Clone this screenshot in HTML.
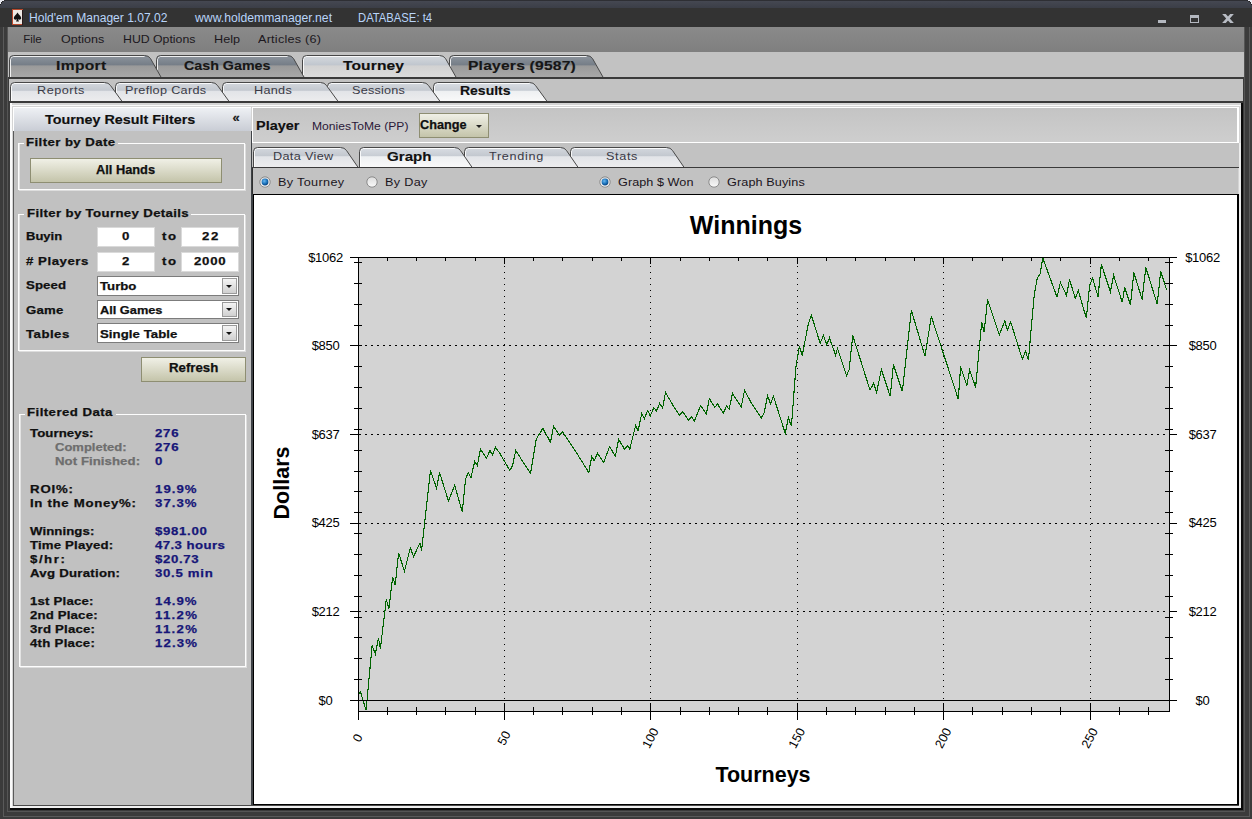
<!DOCTYPE html>
<html><head><meta charset="utf-8">
<style>
*{margin:0;padding:0;box-sizing:border-box}
html,body{width:1252px;height:819px;overflow:hidden;background:#3a3a3a;font-family:"Liberation Sans",sans-serif}
.a{position:absolute}
.t{position:absolute;white-space:pre;line-height:1}
.ttlbar{color:#b9d5fa;font-size:12px}
.menu{color:#1c1820;font-size:12px}
.tab1{font-weight:bold;font-size:13px;color:#161616}
.tab2{font-size:12px;color:#3c3c48}
.tab2s{font-weight:bold;font-size:13px;color:#101010}
.lbl{font-weight:bold;font-size:11px;color:#101010}
.val{font-weight:bold;font-size:11px;color:#1a1a88}
.gry{font-weight:bold;font-size:11px;color:#7a7a7a}
.yl{font-size:13px;fill:#000;letter-spacing:-0.3px}
.xl{font-size:12.5px;fill:#000}
.ttl{font-size:25px;font-weight:bold;fill:#000}
.axt{font-size:21.5px;font-weight:bold;fill:#000}
.inp{background:#fff;border:1px solid #d8d8d8;font-weight:bold;font-size:11px;color:#101010;text-align:center}
.sel{background:#fff;border:1px solid #7a7a7a;}
.btn{background:linear-gradient(#f0f0e6,#c4c4aa);border:1px solid #8e8e72}
.grp{border:1px solid #fdfdfd;box-shadow:inset 1px 0 0 rgba(255,255,255,.55), 1px 1px 0 rgba(255,255,255,.45)}
</style></head><body>
<!-- frame -->
<div class="a" style="left:0;top:0;width:1252px;height:819px;background:#3b3b3b"></div>
<div class="a" style="left:3px;top:27px;width:1px;height:789px;background:#5a5a5a"></div>
<div class="a" style="left:1249px;top:27px;width:1px;height:789px;background:#5a5a5a"></div>
<div class="a" style="left:3px;top:816px;width:1247px;height:1px;background:#5a5a5a"></div>
<div class="a" style="left:7px;top:27px;width:1px;height:784px;background:#555"></div>
<div class="a" style="left:1244px;top:27px;width:1px;height:784px;background:#555"></div>
<div class="a" style="left:7px;top:811px;width:1238px;height:1px;background:#555"></div>
<!-- title bar -->
<div class="a" style="left:0;top:0;width:1252px;height:27px;background:#333333"></div>
<div class="a" style="left:0;top:0;width:1252px;height:8px;background:linear-gradient(#2e2f34 0,#2e2f34 1px,#454852 1px,#3b3e47 8px)"></div>
<svg class="a" style="left:0;top:0" width="6" height="6"><path d="M0 0H4V1H2V2H1V4H0Z" fill="#e8e8f0"/><path d="M4 0.5H4.5M2 1.5H3.5M1.5 2V3.5M0.5 4V5" stroke="#222"/></svg>
<svg class="a" style="left:1246px;top:0" width="6" height="6"><path d="M6 0H2V1H4V2H5V4H6Z" fill="#e8e8f0"/><path d="M2 0.5H1.5M4 1.5H2.5M4.5 2V3.5M5.5 4V5" stroke="#222"/></svg>
<svg class="a" style="left:12px;top:9px" width="11" height="16"><rect x="0.5" y="0.5" width="10" height="15" fill="#efe9e4" stroke="#b8482c"/><rect x="10" y="1" width="1" height="15" fill="#2a1a1a"/><path d="M5.5 3.5 C4 6 1.8 7 1.8 9 C1.8 10.6 3.6 11.2 5 10.2 L4 12.5 H7 L6 10.2 C7.4 11.2 9.2 10.6 9.2 9 C9.2 7 7 6 5.5 3.5Z" fill="#111"/></svg>
<div class="a" style="left:1158px;top:20px;width:8px;height:3px;background:#b4b8c0"></div>
<div class="a" style="left:1190px;top:15px;width:9px;height:8px;border:1px solid #b4b8c0;border-top-width:3px"></div>
<svg class="a" style="left:1220px;top:12px" width="16" height="14"><defs><clipPath id="cx"><rect x="0" y="2" width="16" height="9"/></clipPath></defs><path clip-path="url(#cx)" d="M2.6 0.5 L13.4 12.5 M13.4 0.5 L2.6 12.5" stroke="#b8bcc4" stroke-width="2.7"/></svg>
<!-- menu -->
<div class="a" style="left:8px;top:27px;width:1236px;height:25px;background:linear-gradient(#8a8a8a,#7f7f7f)"></div>
<!-- tab strips -->
<div class="a" style="left:8px;top:52px;width:1236px;height:25px;background:#c2c2c2"></div>
<div class="a" style="left:8px;top:77px;width:1236px;height:1px;background:#3c3c3c"></div>
<div class="a" style="left:9px;top:78px;width:1234px;height:23px;background:#c2c2c2"></div>
<div class="a" style="left:9px;top:101px;width:1234px;height:2px;background:#3a3a3a"></div>
<svg class="a" style="left:449px;top:55px" width="156" height="23"><defs><linearGradient id="t1_3" x1="0" y1="0" x2="0" y2="1"><stop offset="0" stop-color="#8e959e"/><stop offset="0.42" stop-color="#757d87"/><stop offset="0.46" stop-color="#9a9a9a"/><stop offset="1" stop-color="#a9a9a9"/></linearGradient></defs><path d="M0.5 23 V4.5 Q0.5 0.5 4.5 0.5 H137.5 Q141.5 0.5 143.5 3.5 L154.5 23 Z" fill="url(#t1_3)"/><path d="M1.5 23 V4.5 Q1.5 1.5 4.5 1.5 H137.5" fill="none" stroke="#fff" stroke-opacity="0.85"/><path d="M0.5 23 V4.5 Q0.5 0.5 4.5 0.5 H137.5 Q141.5 0.5 143.5 3.5 L154.5 23" fill="none" stroke="#484848"/></svg>
<svg class="a" style="left:302px;top:55px" width="156" height="23"><defs><linearGradient id="t1_2" x1="0" y1="0" x2="0" y2="1"><stop offset="0" stop-color="#d6dade"/><stop offset="0.42" stop-color="#c0c6ce"/><stop offset="0.46" stop-color="#d2d2d2"/><stop offset="1" stop-color="#dcdcdc"/></linearGradient></defs><path d="M0.5 23 V4.5 Q0.5 0.5 4.5 0.5 H137.5 Q141.5 0.5 143.5 3.5 L154.5 23 Z" fill="url(#t1_2)"/><path d="M1.5 23 V4.5 Q1.5 1.5 4.5 1.5 H137.5" fill="none" stroke="#fff" stroke-opacity="0.85"/><path d="M0.5 23 V4.5 Q0.5 0.5 4.5 0.5 H137.5 Q141.5 0.5 143.5 3.5 L154.5 23" fill="none" stroke="#484848"/></svg>
<svg class="a" style="left:156px;top:55px" width="150" height="23"><defs><linearGradient id="t1_1" x1="0" y1="0" x2="0" y2="1"><stop offset="0" stop-color="#8e959e"/><stop offset="0.42" stop-color="#757d87"/><stop offset="0.46" stop-color="#9a9a9a"/><stop offset="1" stop-color="#a9a9a9"/></linearGradient></defs><path d="M0.5 23 V4.5 Q0.5 0.5 4.5 0.5 H131.5 Q135.5 0.5 137.5 3.5 L148.5 23 Z" fill="url(#t1_1)"/><path d="M1.5 23 V4.5 Q1.5 1.5 4.5 1.5 H131.5" fill="none" stroke="#fff" stroke-opacity="0.85"/><path d="M0.5 23 V4.5 Q0.5 0.5 4.5 0.5 H131.5 Q135.5 0.5 137.5 3.5 L148.5 23" fill="none" stroke="#484848"/></svg>
<svg class="a" style="left:9px;top:55px" width="154" height="23"><defs><linearGradient id="t1_0" x1="0" y1="0" x2="0" y2="1"><stop offset="0" stop-color="#8e959e"/><stop offset="0.42" stop-color="#757d87"/><stop offset="0.46" stop-color="#9a9a9a"/><stop offset="1" stop-color="#a9a9a9"/></linearGradient></defs><path d="M0.5 23 V4.5 Q0.5 0.5 4.5 0.5 H135.5 Q139.5 0.5 141.5 3.5 L152.5 23 Z" fill="url(#t1_0)"/><path d="M1.5 23 V4.5 Q1.5 1.5 4.5 1.5 H135.5" fill="none" stroke="#fff" stroke-opacity="0.85"/><path d="M0.5 23 V4.5 Q0.5 0.5 4.5 0.5 H135.5 Q139.5 0.5 141.5 3.5 L152.5 23" fill="none" stroke="#484848"/></svg>
<svg class="a" style="left:433px;top:82px" width="116" height="20"><defs><linearGradient id="t2_4" x1="0" y1="0" x2="0" y2="1"><stop offset="0" stop-color="#dadee4"/><stop offset="0.4" stop-color="#c8cdd4"/><stop offset="0.45" stop-color="#eef0f2"/><stop offset="1" stop-color="#fafafa"/></linearGradient></defs><path d="M0.5 20 V4.5 Q0.5 0.5 4.5 0.5 H96.5 Q100.5 0.5 102.5 3.5 L114.5 20 Z" fill="url(#t2_4)"/><path d="M1.5 20 V4.5 Q1.5 1.5 4.5 1.5 H96.5" fill="none" stroke="#fff" stroke-opacity="0.85"/><path d="M0.5 20 V4.5 Q0.5 0.5 4.5 0.5 H96.5 Q100.5 0.5 102.5 3.5 L114.5 20" fill="none" stroke="#484848"/></svg>
<svg class="a" style="left:327px;top:82px" width="115" height="20"><defs><linearGradient id="t2_3" x1="0" y1="0" x2="0" y2="1"><stop offset="0" stop-color="#d4d8de"/><stop offset="0.4" stop-color="#c3c8cf"/><stop offset="0.45" stop-color="#e2e4e8"/><stop offset="1" stop-color="#ededee"/></linearGradient></defs><path d="M0.5 20 V4.5 Q0.5 0.5 4.5 0.5 H95.5 Q99.5 0.5 101.5 3.5 L113.5 20 Z" fill="url(#t2_3)"/><path d="M1.5 20 V4.5 Q1.5 1.5 4.5 1.5 H95.5" fill="none" stroke="#fff" stroke-opacity="0.85"/><path d="M0.5 20 V4.5 Q0.5 0.5 4.5 0.5 H95.5 Q99.5 0.5 101.5 3.5 L113.5 20" fill="none" stroke="#484848"/></svg>
<svg class="a" style="left:222px;top:82px" width="118" height="20"><defs><linearGradient id="t2_2" x1="0" y1="0" x2="0" y2="1"><stop offset="0" stop-color="#d4d8de"/><stop offset="0.4" stop-color="#c3c8cf"/><stop offset="0.45" stop-color="#e2e4e8"/><stop offset="1" stop-color="#ededee"/></linearGradient></defs><path d="M0.5 20 V4.5 Q0.5 0.5 4.5 0.5 H98.5 Q102.5 0.5 104.5 3.5 L116.5 20 Z" fill="url(#t2_2)"/><path d="M1.5 20 V4.5 Q1.5 1.5 4.5 1.5 H98.5" fill="none" stroke="#fff" stroke-opacity="0.85"/><path d="M0.5 20 V4.5 Q0.5 0.5 4.5 0.5 H98.5 Q102.5 0.5 104.5 3.5 L116.5 20" fill="none" stroke="#484848"/></svg>
<svg class="a" style="left:115px;top:82px" width="116" height="20"><defs><linearGradient id="t2_1" x1="0" y1="0" x2="0" y2="1"><stop offset="0" stop-color="#d4d8de"/><stop offset="0.4" stop-color="#c3c8cf"/><stop offset="0.45" stop-color="#e2e4e8"/><stop offset="1" stop-color="#ededee"/></linearGradient></defs><path d="M0.5 20 V4.5 Q0.5 0.5 4.5 0.5 H96.5 Q100.5 0.5 102.5 3.5 L114.5 20 Z" fill="url(#t2_1)"/><path d="M1.5 20 V4.5 Q1.5 1.5 4.5 1.5 H96.5" fill="none" stroke="#fff" stroke-opacity="0.85"/><path d="M0.5 20 V4.5 Q0.5 0.5 4.5 0.5 H96.5 Q100.5 0.5 102.5 3.5 L114.5 20" fill="none" stroke="#484848"/></svg>
<svg class="a" style="left:10px;top:82px" width="114" height="20"><defs><linearGradient id="t2_0" x1="0" y1="0" x2="0" y2="1"><stop offset="0" stop-color="#d4d8de"/><stop offset="0.4" stop-color="#c3c8cf"/><stop offset="0.45" stop-color="#e2e4e8"/><stop offset="1" stop-color="#ededee"/></linearGradient></defs><path d="M0.5 20 V4.5 Q0.5 0.5 4.5 0.5 H94.5 Q98.5 0.5 100.5 3.5 L112.5 20 Z" fill="url(#t2_0)"/><path d="M1.5 20 V4.5 Q1.5 1.5 4.5 1.5 H94.5" fill="none" stroke="#fff" stroke-opacity="0.85"/><path d="M0.5 20 V4.5 Q0.5 0.5 4.5 0.5 H94.5 Q98.5 0.5 100.5 3.5 L112.5 20" fill="none" stroke="#484848"/></svg>
<div class="a" style="left:8px;top:77px;width:1236px;height:2px;background:#3a3a3a"></div>
<div class="a" style="left:9px;top:101px;width:1234px;height:2px;background:#3a3a3a"></div>
<!-- content frame -->
<div class="a" style="left:10px;top:103px;width:1233px;height:706px;background:#d4d4d4"></div>
<div class="a" style="left:10px;top:105px;width:1231px;height:703px;border:1px solid #fafafa;border-right-color:#e0e0e0"></div>
<!-- left panel -->
<div class="a" style="left:13px;top:107px;width:238px;height:24px;background:linear-gradient(#eef0f4,#c9cdd5);border-top:1px solid #fff;border-left:1px solid #fff"></div>
<div class="t" style="left:232.5px;top:111px;font-size:13px;font-weight:bold;color:#181818;-webkit-text-stroke:0.2px #181818">&#171;</div>
<div class="a" style="left:13px;top:131px;width:238px;height:674px;background:#c1c1c1;border-left:1px solid #5a5a5a"></div>
<div class="a" style="left:251px;top:131px;width:2px;height:674px;background:#3e4246"></div>
<div class="a grp" style="left:18px;top:143px;width:227px;height:47px"></div>
<div class="a" style="left:24px;top:138px;width:94px;height:10px;background:#c1c1c1"></div>
<div class="a grp" style="left:18px;top:214px;width:227px;height:137px"></div>
<div class="a" style="left:24px;top:209px;width:167px;height:10px;background:#c1c1c1"></div>
<div class="a grp" style="left:19px;top:414px;width:227px;height:253px"></div>
<div class="a" style="left:25px;top:409px;width:91px;height:10px;background:#c1c1c1"></div>
<div class="a btn" style="left:30px;top:158px;width:192px;height:25px"></div>
<div class="a btn" style="left:141px;top:357px;width:105px;height:25px"></div>
<div class="a" style="left:97px;top:227px;width:58px;height:20px;background:#fff;border:1px solid #dadada"></div>
<div class="a" style="left:181px;top:227px;width:58px;height:20px;background:#fff;border:1px solid #dadada"></div>
<div class="a" style="left:97px;top:252px;width:58px;height:20px;background:#fff;border:1px solid #dadada"></div>
<div class="a" style="left:181px;top:252px;width:58px;height:20px;background:#fff;border:1px solid #dadada"></div>
<div class="a" style="left:97px;top:276px;width:142px;height:20px;background:#fff;border:1px solid #7c7c7c"></div>
<div class="a" style="left:222px;top:278px;width:15px;height:16px;background:linear-gradient(#f4f4f4,#d0d0d0);border:1px solid #9a9a9a"></div>
<svg class="a" style="left:226px;top:285px" width="7" height="4"><path d="M0 0H6L3 3Z" fill="#111"/></svg>
<div class="a" style="left:97px;top:300px;width:142px;height:19px;background:#fff;border:1px solid #7c7c7c"></div>
<div class="a" style="left:222px;top:302px;width:15px;height:15px;background:linear-gradient(#f4f4f4,#d0d0d0);border:1px solid #9a9a9a"></div>
<svg class="a" style="left:226px;top:308px" width="7" height="4"><path d="M0 0H6L3 3Z" fill="#111"/></svg>
<div class="a" style="left:97px;top:323px;width:142px;height:20px;background:#fff;border:1px solid #7c7c7c"></div>
<div class="a" style="left:222px;top:325px;width:15px;height:16px;background:linear-gradient(#f4f4f4,#d0d0d0);border:1px solid #9a9a9a"></div>
<svg class="a" style="left:226px;top:332px" width="7" height="4"><path d="M0 0H6L3 3Z" fill="#111"/></svg>
<!-- main area -->
<div class="a" style="left:252px;top:107px;width:987px;height:36px;background:linear-gradient(#c4c4c4,#cecece);border:1px solid #fff;border-right-width:2px"></div>
<div class="a btn" style="left:419px;top:113px;width:70px;height:25px"></div>
<svg class="a" style="left:476px;top:125px" width="8" height="5"><path d="M0 0H6L3 3Z" fill="#202020"/></svg>
<div class="a" style="left:252px;top:143px;width:989px;height:25px;background:#c2c2c2"></div>
<svg class="a" style="left:570px;top:147px" width="116" height="21"><defs><linearGradient id="st_3" x1="0" y1="0" x2="0" y2="1"><stop offset="0" stop-color="#d4d8de"/><stop offset="0.4" stop-color="#c3c8cf"/><stop offset="0.45" stop-color="#e2e4e8"/><stop offset="1" stop-color="#ededee"/></linearGradient></defs><path d="M0.5 21 V4.5 Q0.5 0.5 4.5 0.5 H96.5 Q100.5 0.5 102.5 3.5 L114.5 21 Z" fill="url(#st_3)"/><path d="M1.5 21 V4.5 Q1.5 1.5 4.5 1.5 H96.5" fill="none" stroke="#fff" stroke-opacity="0.85"/><path d="M0.5 21 V4.5 Q0.5 0.5 4.5 0.5 H96.5 Q100.5 0.5 102.5 3.5 L114.5 21" fill="none" stroke="#484848"/></svg>
<svg class="a" style="left:464px;top:147px" width="116" height="21"><defs><linearGradient id="st_2" x1="0" y1="0" x2="0" y2="1"><stop offset="0" stop-color="#d4d8de"/><stop offset="0.4" stop-color="#c3c8cf"/><stop offset="0.45" stop-color="#e2e4e8"/><stop offset="1" stop-color="#ededee"/></linearGradient></defs><path d="M0.5 21 V4.5 Q0.5 0.5 4.5 0.5 H96.5 Q100.5 0.5 102.5 3.5 L114.5 21 Z" fill="url(#st_2)"/><path d="M1.5 21 V4.5 Q1.5 1.5 4.5 1.5 H96.5" fill="none" stroke="#fff" stroke-opacity="0.85"/><path d="M0.5 21 V4.5 Q0.5 0.5 4.5 0.5 H96.5 Q100.5 0.5 102.5 3.5 L114.5 21" fill="none" stroke="#484848"/></svg>
<svg class="a" style="left:359px;top:147px" width="115" height="21"><defs><linearGradient id="st_1" x1="0" y1="0" x2="0" y2="1"><stop offset="0" stop-color="#dadee4"/><stop offset="0.4" stop-color="#c8cdd4"/><stop offset="0.45" stop-color="#eef0f2"/><stop offset="1" stop-color="#fafafa"/></linearGradient></defs><path d="M0.5 21 V4.5 Q0.5 0.5 4.5 0.5 H95.5 Q99.5 0.5 101.5 3.5 L113.5 21 Z" fill="url(#st_1)"/><path d="M1.5 21 V4.5 Q1.5 1.5 4.5 1.5 H95.5" fill="none" stroke="#fff" stroke-opacity="0.85"/><path d="M0.5 21 V4.5 Q0.5 0.5 4.5 0.5 H95.5 Q99.5 0.5 101.5 3.5 L113.5 21" fill="none" stroke="#484848"/></svg>
<svg class="a" style="left:253px;top:147px" width="107" height="21"><defs><linearGradient id="st_0" x1="0" y1="0" x2="0" y2="1"><stop offset="0" stop-color="#d4d8de"/><stop offset="0.4" stop-color="#c3c8cf"/><stop offset="0.45" stop-color="#e2e4e8"/><stop offset="1" stop-color="#ededee"/></linearGradient></defs><path d="M0.5 21 V4.5 Q0.5 0.5 4.5 0.5 H87.5 Q91.5 0.5 93.5 3.5 L105.5 21 Z" fill="url(#st_0)"/><path d="M1.5 21 V4.5 Q1.5 1.5 4.5 1.5 H87.5" fill="none" stroke="#fff" stroke-opacity="0.85"/><path d="M0.5 21 V4.5 Q0.5 0.5 4.5 0.5 H87.5 Q91.5 0.5 93.5 3.5 L105.5 21" fill="none" stroke="#484848"/></svg>
<div class="a" style="left:252px;top:167px;width:987px;height:1px;background:#3a3a3a"></div>
<div class="a" style="left:252px;top:168px;width:986px;height:26px;background:#c2c2c2;border-left:1px solid #303030"></div>
<svg class="a" style="left:259px;top:176px" width="12" height="12"><defs><radialGradient id="rd" cx="0.4" cy="0.35" r="0.7"><stop offset="0" stop-color="#6ab8f0"/><stop offset="0.6" stop-color="#1a70b8"/><stop offset="1" stop-color="#063c78"/></radialGradient><linearGradient id="rb" x1="0" y1="0" x2="0" y2="1"><stop offset="0" stop-color="#dcdcdc"/><stop offset="1" stop-color="#fafafa"/></linearGradient></defs><circle cx="6" cy="6" r="5.2" fill="url(#rb)" stroke="#8a8a8a" stroke-width="1"/><circle cx="6" cy="6" r="3.4" fill="url(#rd)"/></svg>
<svg class="a" style="left:366px;top:176px" width="12" height="12"><defs><radialGradient id="rd" cx="0.4" cy="0.35" r="0.7"><stop offset="0" stop-color="#6ab8f0"/><stop offset="0.6" stop-color="#1a70b8"/><stop offset="1" stop-color="#063c78"/></radialGradient><linearGradient id="rb" x1="0" y1="0" x2="0" y2="1"><stop offset="0" stop-color="#dcdcdc"/><stop offset="1" stop-color="#fafafa"/></linearGradient></defs><circle cx="6" cy="6" r="5.2" fill="url(#rb)" stroke="#8a8a8a" stroke-width="1"/></svg>
<svg class="a" style="left:599px;top:176px" width="12" height="12"><defs><radialGradient id="rd" cx="0.4" cy="0.35" r="0.7"><stop offset="0" stop-color="#6ab8f0"/><stop offset="0.6" stop-color="#1a70b8"/><stop offset="1" stop-color="#063c78"/></radialGradient><linearGradient id="rb" x1="0" y1="0" x2="0" y2="1"><stop offset="0" stop-color="#dcdcdc"/><stop offset="1" stop-color="#fafafa"/></linearGradient></defs><circle cx="6" cy="6" r="5.2" fill="url(#rb)" stroke="#8a8a8a" stroke-width="1"/><circle cx="6" cy="6" r="3.4" fill="url(#rd)"/></svg>
<svg class="a" style="left:708px;top:176px" width="12" height="12"><defs><radialGradient id="rd" cx="0.4" cy="0.35" r="0.7"><stop offset="0" stop-color="#6ab8f0"/><stop offset="0.6" stop-color="#1a70b8"/><stop offset="1" stop-color="#063c78"/></radialGradient><linearGradient id="rb" x1="0" y1="0" x2="0" y2="1"><stop offset="0" stop-color="#dcdcdc"/><stop offset="1" stop-color="#fafafa"/></linearGradient></defs><circle cx="6" cy="6" r="5.2" fill="url(#rb)" stroke="#8a8a8a" stroke-width="1"/></svg>
<div class="a" style="left:253px;top:194px;width:986px;height:611px;background:#fff;border:1px solid #000;border-width:1px 2px 1px 1px"></div>
<svg class="a" style="left:0;top:0" width="1252" height="819">
<rect x="358" y="257" width="811" height="454" fill="#d3d3d3"/>
<line x1="359" y1="611.5" x2="1169" y2="611.5" stroke="#000" stroke-dasharray="2 4"/>
<line x1="359" y1="523.5" x2="1169" y2="523.5" stroke="#000" stroke-dasharray="2 4"/>
<line x1="359" y1="434.5" x2="1169" y2="434.5" stroke="#000" stroke-dasharray="2 4"/>
<line x1="359" y1="345.5" x2="1169" y2="345.5" stroke="#000" stroke-dasharray="2 4"/>
<line x1="504.5" y1="711" x2="504.5" y2="258" stroke="#000" stroke-dasharray="1 5"/>
<line x1="650.5" y1="711" x2="650.5" y2="258" stroke="#000" stroke-dasharray="1 5"/>
<line x1="797.5" y1="711" x2="797.5" y2="258" stroke="#000" stroke-dasharray="1 5"/>
<line x1="943.5" y1="711" x2="943.5" y2="258" stroke="#000" stroke-dasharray="1 5"/>
<line x1="1090.5" y1="711" x2="1090.5" y2="258" stroke="#000" stroke-dasharray="1 5"/>
<path d="M358.5 694.5 L360.6 692.1 L366.1 710.4 L372.1 645.3 L375.3 654.0 L378.5 638.2 L380.4 648.5 L386.3 599.4 L388.9 608.4 L392.7 577.0 L395.2 584.9 L398.6 552.7 L404.4 571.2 L410.3 547.8 L413.6 556.6 L420.0 542.9 L421.6 550.7 L430.4 470.6 L436.6 488.2 L439.6 472.6 L448.4 500.9 L454.6 485.3 L462.3 511.9 L465.6 478.9 L468.1 472.7 L471.0 477.4 L474.7 461.3 L477.3 465.4 L480.5 449.3 L486.4 458.1 L490.0 450.7 L492.5 454.7 L495.5 447.4 L499.3 452.5 L509.8 470.4 L512.5 465.7 L515.7 450.7 L530.6 473.3 L536.2 439.3 L542.8 428.3 L550.5 442.2 L553.5 426.4 L559.6 435.2 L562.6 431.7 L577.3 454.0 L588.8 472.6 L591.7 456.5 L594.2 460.6 L597.5 453.3 L603.7 462.3 L609.6 446.7 L615.4 456.2 L618.6 439.3 L624.5 449.2 L627.9 445.6 L629.8 449.2 L635.6 425.4 L638.1 430.5 L641.8 413.4 L644.4 418.4 L647.7 410.5 L650.3 415.9 L653.8 407.5 L656.4 411.1 L659.7 403.4 L662.6 408.1 L665.5 392.5 L674.0 407.1 L679.6 415.5 L682.4 411.4 L688.6 420.4 L691.4 416.6 L694.4 421.3 L700.5 405.5 L706.4 414.0 L709.3 398.6 L714.9 407.4 L717.4 403.7 L723.2 413.2 L726.6 405.9 L729.1 409.3 L732.5 393.4 L741.2 406.9 L744.5 390.5 L751.8 403.7 L761.3 418.1 L764.2 412.5 L767.6 395.6 L770.5 404.0 L773.5 396.4 L785.2 433.3 L788.4 417.6 L791.4 426.4 L796.0 366.0 L799.4 346.2 L802.3 355.4 L808.4 323.4 L811.4 315.4 L820.2 343.2 L823.4 335.5 L826.8 344.7 L829.4 337.8 L835.5 354.9 L837.5 348.6 L846.5 375.5 L849.2 369.6 L852.7 335.5 L870.0 390.1 L873.6 383.5 L876.6 392.3 L881.4 369.6 L890.2 396.4 L893.4 364.5 L902.3 391.4 L911.4 310.5 L925.0 356.2 L931.3 316.4 L958.3 399.2 L960.6 366.5 L966.8 385.5 L969.7 369.9 L975.6 387.4 L981.7 322.2 L984.1 331.8 L987.6 299.5 L999.3 335.1 L1004.8 321.0 L1007.4 330.1 L1010.7 322.0 L1022.3 359.2 L1025.5 351.1 L1028.4 360.2 L1034.3 294.0 L1037.2 278.6 L1040.2 273.4 L1042.8 258.1 L1057.0 297.2 L1060.4 282.5 L1066.5 295.4 L1069.5 279.3 L1075.3 298.4 L1078.3 290.7 L1086.3 318.1 L1089.7 285.2 L1092.6 278.1 L1098.0 296.6 L1101.4 264.4 L1110.4 291.5 L1113.6 275.4 L1122.3 302.3 L1124.7 287.5 L1130.5 304.9 L1133.8 272.4 L1142.1 299.5 L1145.8 267.4 L1157.2 304.0 L1160.7 271.5 L1166.8 290.3" fill="none" stroke="#006400" stroke-width="1.1" shape-rendering="crispEdges"/>
<path d="M350 257.5H1177 M358.5 257V720 M1169.5 257V711 M358 711.5H1170 M350 700.5H1177" stroke="#000" fill="none"/>
<path d="M354 679.5H362 M1165 679.5H1173 M354 658.5H362 M1165 658.5H1173 M354 637.5H362 M1165 637.5H1173 M354 617.5H362 M1165 617.5H1173 M354 596.5H362 M1165 596.5H1173 M354 575.5H362 M1165 575.5H1173 M354 554.5H362 M1165 554.5H1173 M354 533.5H362 M1165 533.5H1173 M354 512.5H362 M1165 512.5H1173 M354 491.5H362 M1165 491.5H1173 M354 471.5H362 M1165 471.5H1173 M354 450.5H362 M1165 450.5H1173 M354 429.5H362 M1165 429.5H1173 M354 408.5H362 M1165 408.5H1173 M354 387.5H362 M1165 387.5H1173 M354 366.5H362 M1165 366.5H1173 M354 345.5H362 M1165 345.5H1173 M354 325.5H362 M1165 325.5H1173 M354 304.5H362 M1165 304.5H1173 M354 283.5H362 M1165 283.5H1173 M354 262.5H362 M1165 262.5H1173 M350 611.5H358 M1169 611.5H1177 M350 523.5H358 M1169 523.5H1177 M350 434.5H358 M1169 434.5H1177 M350 345.5H358 M1169 345.5H1177 M350 257.5H358 M1169 257.5H1177 M387.5 707V715 M387.5 257V261 M416.5 707V715 M416.5 257V261 M445.5 707V715 M445.5 257V261 M475.5 707V715 M475.5 257V261 M504.5 703V720 M504.5 257V264 M533.5 707V715 M533.5 257V261 M562.5 707V715 M562.5 257V261 M592.5 707V715 M592.5 257V261 M621.5 707V715 M621.5 257V261 M650.5 703V720 M650.5 257V264 M680.5 707V715 M680.5 257V261 M709.5 707V715 M709.5 257V261 M738.5 707V715 M738.5 257V261 M767.5 707V715 M767.5 257V261 M797.5 703V720 M797.5 257V264 M826.5 707V715 M826.5 257V261 M855.5 707V715 M855.5 257V261 M885.5 707V715 M885.5 257V261 M914.5 707V715 M914.5 257V261 M943.5 703V720 M943.5 257V264 M972.5 707V715 M972.5 257V261 M1002.5 707V715 M1002.5 257V261 M1031.5 707V715 M1031.5 257V261 M1060.5 707V715 M1060.5 257V261 M1090.5 703V720 M1090.5 257V264 M1119.5 707V715 M1119.5 257V261 M1148.5 707V715 M1148.5 257V261" stroke="#000" fill="none" shape-rendering="crispEdges"/>
<text x="325.5" y="704.6" text-anchor="middle" class="yl">$0</text>
<text x="1202.5" y="704.6" text-anchor="middle" class="yl">$0</text>
<text x="325.5" y="616.0" text-anchor="middle" class="yl">$212</text>
<text x="1202.5" y="616.0" text-anchor="middle" class="yl">$212</text>
<text x="325.5" y="527.4" text-anchor="middle" class="yl">$425</text>
<text x="1202.5" y="527.4" text-anchor="middle" class="yl">$425</text>
<text x="325.5" y="438.8" text-anchor="middle" class="yl">$637</text>
<text x="1202.5" y="438.8" text-anchor="middle" class="yl">$637</text>
<text x="325.5" y="350.2" text-anchor="middle" class="yl">$850</text>
<text x="1202.5" y="350.2" text-anchor="middle" class="yl">$850</text>
<text x="325.5" y="261.6" text-anchor="middle" class="yl">$1062</text>
<text x="1202.5" y="261.6" text-anchor="middle" class="yl">$1062</text>
<text class="xl" text-anchor="middle" transform="translate(357.5 738) rotate(-62)" y="4.3">0</text>
<text class="xl" text-anchor="middle" transform="translate(503.9 738) rotate(-62)" y="4.3">50</text>
<text class="xl" text-anchor="middle" transform="translate(650.3 738) rotate(-62)" y="4.3">100</text>
<text class="xl" text-anchor="middle" transform="translate(796.7 738) rotate(-62)" y="4.3">150</text>
<text class="xl" text-anchor="middle" transform="translate(943.1 738) rotate(-62)" y="4.3">200</text>
<text class="xl" text-anchor="middle" transform="translate(1089.5 738) rotate(-62)" y="4.3">250</text>
<text x="746" y="234" text-anchor="middle" class="ttl">Winnings</text>
<text x="763" y="782" text-anchor="middle" class="axt">Tourneys</text>
<text transform="translate(289 483) rotate(-90)" text-anchor="middle" class="axt">Dollars</text>
</svg>
<!-- bottom lines -->
<div class="a" style="left:13px;top:805px;width:1229px;height:1px;background:#4a4a4a"></div>
<div class="a" style="left:10px;top:806px;width:1231px;height:2px;background:#f0f0f0"></div>
<div class="a" style="left:10px;top:808px;width:1233px;height:2px;background:#0a0a0a"></div>
<div class="a" style="left:1239px;top:143px;width:2px;height:665px;background:#ececec"></div>
<div class="a" style="left:1241px;top:103px;width:2px;height:707px;background:#0a0a0a"></div>
<div class="a" style="left:10px;top:103px;width:2px;height:705px;background:#fafafa"></div>
<!--texts-->
<div class="t" style="left:55.7px;top:58.5px;font-size:13px;font-weight:bold;color:#161616;letter-spacing:0.28px;transform:scaleX(1.200);transform-origin:0 0;-webkit-text-stroke:0.15px currentColor;">Import</div>
<div class="t" style="left:184.1px;top:58.5px;font-size:13px;font-weight:bold;color:#161616;letter-spacing:0.00px;transform:scaleX(1.098);transform-origin:0 0;-webkit-text-stroke:0.15px currentColor;">Cash Games</div>
<div class="t" style="left:343.0px;top:58.5px;font-size:13px;font-weight:bold;color:#101010;letter-spacing:0.08px;transform:scaleX(1.200);transform-origin:0 0;-webkit-text-stroke:0.15px currentColor;">Tourney</div>
<div class="t" style="left:468.2px;top:58.5px;font-size:13px;font-weight:bold;color:#161616;letter-spacing:0.18px;transform:scaleX(1.200);transform-origin:0 0;-webkit-text-stroke:0.15px currentColor;">Players (9587)</div>
<div class="t" style="left:36.5px;top:85.3px;font-size:11.5px;font-weight:normal;color:#3a3a46;letter-spacing:0.47px;transform:scaleX(1.100);transform-origin:0 0;">Reports</div>
<div class="t" style="left:125.4px;top:85.3px;font-size:11.5px;font-weight:normal;color:#3a3a46;letter-spacing:0.29px;transform:scaleX(1.100);transform-origin:0 0;">Preflop Cards</div>
<div class="t" style="left:253.8px;top:85.3px;font-size:11.5px;font-weight:normal;color:#3a3a46;letter-spacing:0.26px;transform:scaleX(1.100);transform-origin:0 0;">Hands</div>
<div class="t" style="left:351.9px;top:85.3px;font-size:11.5px;font-weight:normal;color:#3a3a46;letter-spacing:0.20px;transform:scaleX(1.100);transform-origin:0 0;">Sessions</div>
<div class="t" style="left:460.0px;top:83.8px;font-size:13px;font-weight:bold;color:#101010;letter-spacing:0.00px;transform:scaleX(1.075);transform-origin:0 0;-webkit-text-stroke:0.15px currentColor;">Results</div>
<div class="t" style="left:273.1px;top:151.3px;font-size:11.5px;font-weight:normal;color:#3a3a46;letter-spacing:0.32px;transform:scaleX(1.100);transform-origin:0 0;">Data View</div>
<div class="t" style="left:387.3px;top:150.0px;font-size:13px;font-weight:bold;color:#101010;letter-spacing:-0.00px;transform:scaleX(1.162);transform-origin:0 0;-webkit-text-stroke:0.15px currentColor;">Graph</div>
<div class="t" style="left:488.5px;top:151.3px;font-size:11.5px;font-weight:normal;color:#3a3a46;letter-spacing:0.63px;transform:scaleX(1.100);transform-origin:0 0;">Trending</div>
<div class="t" style="left:606.2px;top:151.3px;font-size:11.5px;font-weight:normal;color:#3a3a46;letter-spacing:0.58px;transform:scaleX(1.100);transform-origin:0 0;">Stats</div>
<div class="t" style="left:277.9px;top:176.6px;font-size:11.5px;font-weight:normal;color:#1a1420;letter-spacing:0.31px;transform:scaleX(1.100);transform-origin:0 0;">By Tourney</div>
<div class="t" style="left:384.9px;top:176.6px;font-size:11.5px;font-weight:normal;color:#1a1420;letter-spacing:0.28px;transform:scaleX(1.100);transform-origin:0 0;">By Day</div>
<div class="t" style="left:618.0px;top:176.6px;font-size:11.5px;font-weight:normal;color:#1a1420;letter-spacing:0.04px;transform:scaleX(1.100);transform-origin:0 0;">Graph $ Won</div>
<div class="t" style="left:726.8px;top:176.6px;font-size:11.5px;font-weight:normal;color:#1a1420;letter-spacing:0.09px;transform:scaleX(1.100);transform-origin:0 0;">Graph Buyins</div>
<div class="t" style="left:29.1px;top:11.8px;font-size:12px;font-weight:normal;color:#b9d5fa;letter-spacing:0.00px;transform:scaleX(1.005);transform-origin:0 0;">Hold'em Manager 1.07.02</div>
<div class="t" style="left:194.5px;top:11.8px;font-size:12px;font-weight:normal;color:#b9d5fa;letter-spacing:0.00px;transform:scaleX(1.017);transform-origin:0 0;">www.holdemmanager.net</div>
<div class="t" style="left:357.5px;top:11.8px;font-size:12px;font-weight:normal;color:#b9d5fa;letter-spacing:0.00px;transform:scaleX(0.938);transform-origin:0 0;">DATABASE: t4</div>
<div class="t" style="left:23.2px;top:34.3px;font-size:11.5px;font-weight:normal;color:#1c1820;letter-spacing:0.00px;">File</div>
<div class="t" style="left:61.1px;top:34.3px;font-size:11.5px;font-weight:normal;color:#1c1820;letter-spacing:0.00px;transform:scaleX(1.090);transform-origin:0 0;">Options</div>
<div class="t" style="left:123.1px;top:34.3px;font-size:11.5px;font-weight:normal;color:#1c1820;letter-spacing:0.00px;transform:scaleX(1.069);transform-origin:0 0;">HUD Options</div>
<div class="t" style="left:213.5px;top:34.3px;font-size:11.5px;font-weight:normal;color:#1c1820;letter-spacing:0.00px;transform:scaleX(1.099);transform-origin:0 0;">Help</div>
<div class="t" style="left:257.5px;top:34.3px;font-size:11.5px;font-weight:normal;color:#1c1820;letter-spacing:0.21px;transform:scaleX(1.100);transform-origin:0 0;">Articles (6)</div>
<div class="t" style="left:256.1px;top:119.0px;font-size:13px;font-weight:bold;color:#101010;letter-spacing:0.00px;transform:scaleX(1.111);transform-origin:0 0;-webkit-text-stroke:0.15px currentColor;">Player</div>
<div class="t" style="left:311.5px;top:120.7px;font-size:11px;font-weight:normal;color:#2a1838;letter-spacing:0.02px;transform:scaleX(1.100);transform-origin:0 0;">MoniesToMe (PP)</div>
<div class="t" style="left:420.0px;top:118.8px;font-size:12px;font-weight:bold;color:#101010;letter-spacing:0.00px;transform:scaleX(1.056);transform-origin:0 0;-webkit-text-stroke:0.25px currentColor;">Change</div>
<div class="t" style="left:45.0px;top:113.0px;font-size:13px;font-weight:bold;color:#101010;letter-spacing:0.00px;transform:scaleX(1.103);transform-origin:0 0;-webkit-text-stroke:0.15px currentColor;">Tourney Result Filters</div>
<div class="t" style="left:26.0px;top:136.7px;font-size:11px;font-weight:bold;color:#101010;letter-spacing:0.35px;transform:scaleX(1.200);transform-origin:0 0;-webkit-text-stroke:0.25px currentColor;">Filter by Date</div>
<div class="t" style="left:96.1px;top:163.6px;font-size:12px;font-weight:bold;color:#101010;letter-spacing:-0.00px;transform:scaleX(1.066);transform-origin:0 0;-webkit-text-stroke:0.25px currentColor;">All Hands</div>
<div class="t" style="left:26.5px;top:208.1px;font-size:11px;font-weight:bold;color:#101010;letter-spacing:0.30px;transform:scaleX(1.200);transform-origin:0 0;-webkit-text-stroke:0.25px currentColor;">Filter by Tourney Details</div>
<div class="t" style="left:25.9px;top:231.4px;font-size:11px;font-weight:bold;color:#101010;letter-spacing:0.00px;transform:scaleX(1.181);transform-origin:0 0;-webkit-text-stroke:0.25px currentColor;">Buyin</div>
<div class="t" style="left:25.9px;top:255.7px;font-size:11px;font-weight:bold;color:#101010;letter-spacing:0.45px;transform:scaleX(1.200);transform-origin:0 0;-webkit-text-stroke:0.25px currentColor;"># Players</div>
<div class="t" style="left:25.9px;top:279.6px;font-size:11px;font-weight:bold;color:#101010;letter-spacing:0.08px;transform:scaleX(1.200);transform-origin:0 0;-webkit-text-stroke:0.25px currentColor;">Speed</div>
<div class="t" style="left:25.9px;top:304.7px;font-size:11px;font-weight:bold;color:#101010;letter-spacing:0.20px;transform:scaleX(1.200);transform-origin:0 0;-webkit-text-stroke:0.25px currentColor;">Game</div>
<div class="t" style="left:25.9px;top:329.0px;font-size:11px;font-weight:bold;color:#101010;letter-spacing:0.41px;transform:scaleX(1.200);transform-origin:0 0;-webkit-text-stroke:0.25px currentColor;">Tables</div>
<div class="t" style="left:161.5px;top:231.4px;font-size:11px;font-weight:bold;color:#101010;letter-spacing:1.28px;transform:scaleX(1.200);transform-origin:0 0;-webkit-text-stroke:0.25px currentColor;">to</div>
<div class="t" style="left:161.5px;top:255.7px;font-size:11px;font-weight:bold;color:#101010;letter-spacing:1.28px;transform:scaleX(1.200);transform-origin:0 0;-webkit-text-stroke:0.25px currentColor;">to</div>
<div class="t" style="left:122.1px;top:231.4px;font-size:11px;font-weight:bold;color:#101010;letter-spacing:0.00px;transform:scaleX(1.200);transform-origin:0 0;-webkit-text-stroke:0.25px currentColor;">0</div>
<div class="t" style="left:202.1px;top:231.4px;font-size:11px;font-weight:bold;color:#101010;letter-spacing:1.42px;transform:scaleX(1.200);transform-origin:0 0;-webkit-text-stroke:0.25px currentColor;">22</div>
<div class="t" style="left:122.1px;top:255.7px;font-size:11px;font-weight:bold;color:#101010;letter-spacing:0.00px;transform:scaleX(1.200);transform-origin:0 0;-webkit-text-stroke:0.25px currentColor;">2</div>
<div class="t" style="left:194.4px;top:255.7px;font-size:11px;font-weight:bold;color:#101010;letter-spacing:0.64px;transform:scaleX(1.200);transform-origin:0 0;-webkit-text-stroke:0.25px currentColor;">2000</div>
<div class="t" style="left:100.0px;top:280.7px;font-size:11px;font-weight:bold;color:#101010;letter-spacing:0.00px;transform:scaleX(1.200);transform-origin:0 0;-webkit-text-stroke:0.25px currentColor;">Turbo</div>
<div class="t" style="left:99.5px;top:304.7px;font-size:11px;font-weight:bold;color:#101010;letter-spacing:0.00px;transform:scaleX(1.161);transform-origin:0 0;-webkit-text-stroke:0.25px currentColor;">All Games</div>
<div class="t" style="left:99.5px;top:328.7px;font-size:11px;font-weight:bold;color:#101010;letter-spacing:0.05px;transform:scaleX(1.200);transform-origin:0 0;-webkit-text-stroke:0.25px currentColor;">Single Table</div>
<div class="t" style="left:168.7px;top:362.4px;font-size:12px;font-weight:bold;color:#101010;letter-spacing:0.00px;transform:scaleX(1.101);transform-origin:0 0;-webkit-text-stroke:0.25px currentColor;">Refresh</div>
<div class="t" style="left:27.0px;top:407.4px;font-size:11px;font-weight:bold;color:#101010;letter-spacing:0.38px;transform:scaleX(1.200);transform-origin:0 0;-webkit-text-stroke:0.25px currentColor;">Filtered Data</div>
<div class="t" style="left:29.8px;top:427.9px;font-size:11px;font-weight:bold;color:#101010;letter-spacing:0.07px;transform:scaleX(1.200);transform-origin:0 0;-webkit-text-stroke:0.25px currentColor;">Tourneys:</div>
<div class="t" style="left:155.1px;top:427.9px;font-size:11px;font-weight:bold;color:#161678;letter-spacing:0.65px;transform:scaleX(1.200);transform-origin:0 0;-webkit-text-stroke:0.25px currentColor;">276</div>
<div class="t" style="left:55.1px;top:442.0px;font-size:11px;font-weight:bold;color:#6e6e6e;letter-spacing:0.00px;transform:scaleX(1.183);transform-origin:0 0;-webkit-text-stroke:0.25px currentColor;">Completed:</div>
<div class="t" style="left:155.1px;top:442.0px;font-size:11px;font-weight:bold;color:#161678;letter-spacing:0.65px;transform:scaleX(1.200);transform-origin:0 0;-webkit-text-stroke:0.25px currentColor;">276</div>
<div class="t" style="left:55.1px;top:456.1px;font-size:11px;font-weight:bold;color:#6e6e6e;letter-spacing:0.05px;transform:scaleX(1.200);transform-origin:0 0;-webkit-text-stroke:0.25px currentColor;">Not Finished:</div>
<div class="t" style="left:155.1px;top:456.1px;font-size:11px;font-weight:bold;color:#161678;letter-spacing:0.00px;transform:scaleX(1.200);transform-origin:0 0;-webkit-text-stroke:0.25px currentColor;">0</div>
<div class="t" style="left:29.8px;top:483.5px;font-size:11px;font-weight:bold;color:#101010;letter-spacing:0.71px;transform:scaleX(1.200);transform-origin:0 0;-webkit-text-stroke:0.25px currentColor;">ROI%:</div>
<div class="t" style="left:155.1px;top:483.5px;font-size:11px;font-weight:bold;color:#161678;letter-spacing:0.87px;transform:scaleX(1.200);transform-origin:0 0;-webkit-text-stroke:0.25px currentColor;">19.9%</div>
<div class="t" style="left:29.8px;top:497.9px;font-size:11px;font-weight:bold;color:#101010;letter-spacing:0.58px;transform:scaleX(1.200);transform-origin:0 0;-webkit-text-stroke:0.25px currentColor;">In the Money%:</div>
<div class="t" style="left:155.1px;top:497.9px;font-size:11px;font-weight:bold;color:#161678;letter-spacing:0.87px;transform:scaleX(1.200);transform-origin:0 0;-webkit-text-stroke:0.25px currentColor;">37.3%</div>
<div class="t" style="left:29.8px;top:525.7px;font-size:11px;font-weight:bold;color:#101010;letter-spacing:0.07px;transform:scaleX(1.200);transform-origin:0 0;-webkit-text-stroke:0.25px currentColor;">Winnings:</div>
<div class="t" style="left:155.1px;top:525.7px;font-size:11px;font-weight:bold;color:#161678;letter-spacing:0.57px;transform:scaleX(1.200);transform-origin:0 0;-webkit-text-stroke:0.25px currentColor;">$981.00</div>
<div class="t" style="left:29.8px;top:539.9px;font-size:11px;font-weight:bold;color:#101010;letter-spacing:0.14px;transform:scaleX(1.200);transform-origin:0 0;-webkit-text-stroke:0.25px currentColor;">Time Played:</div>
<div class="t" style="left:155.1px;top:539.9px;font-size:11px;font-weight:bold;color:#161678;letter-spacing:0.35px;transform:scaleX(1.200);transform-origin:0 0;-webkit-text-stroke:0.25px currentColor;">47.3 hours</div>
<div class="t" style="left:29.8px;top:553.5px;font-size:11px;font-weight:bold;color:#101010;letter-spacing:1.29px;transform:scaleX(1.200);transform-origin:0 0;-webkit-text-stroke:0.25px currentColor;">$/hr:</div>
<div class="t" style="left:155.1px;top:553.5px;font-size:11px;font-weight:bold;color:#161678;letter-spacing:0.54px;transform:scaleX(1.200);transform-origin:0 0;-webkit-text-stroke:0.25px currentColor;">$20.73</div>
<div class="t" style="left:29.8px;top:567.7px;font-size:11px;font-weight:bold;color:#101010;letter-spacing:0.22px;transform:scaleX(1.200);transform-origin:0 0;-webkit-text-stroke:0.25px currentColor;">Avg Duration:</div>
<div class="t" style="left:155.1px;top:567.7px;font-size:11px;font-weight:bold;color:#161678;letter-spacing:0.58px;transform:scaleX(1.200);transform-origin:0 0;-webkit-text-stroke:0.25px currentColor;">30.5 min</div>
<div class="t" style="left:29.8px;top:595.7px;font-size:11px;font-weight:bold;color:#101010;letter-spacing:0.17px;transform:scaleX(1.200);transform-origin:0 0;-webkit-text-stroke:0.25px currentColor;">1st Place:</div>
<div class="t" style="left:155.1px;top:595.7px;font-size:11px;font-weight:bold;color:#161678;letter-spacing:0.87px;transform:scaleX(1.200);transform-origin:0 0;-webkit-text-stroke:0.25px currentColor;">14.9%</div>
<div class="t" style="left:29.8px;top:610.0px;font-size:11px;font-weight:bold;color:#101010;letter-spacing:0.14px;transform:scaleX(1.200);transform-origin:0 0;-webkit-text-stroke:0.25px currentColor;">2nd Place:</div>
<div class="t" style="left:155.1px;top:610.0px;font-size:11px;font-weight:bold;color:#161678;letter-spacing:1.10px;transform:scaleX(1.200);transform-origin:0 0;-webkit-text-stroke:0.25px currentColor;">11.2%</div>
<div class="t" style="left:29.8px;top:623.9px;font-size:11px;font-weight:bold;color:#101010;letter-spacing:0.17px;transform:scaleX(1.200);transform-origin:0 0;-webkit-text-stroke:0.25px currentColor;">3rd Place:</div>
<div class="t" style="left:155.1px;top:623.9px;font-size:11px;font-weight:bold;color:#161678;letter-spacing:1.10px;transform:scaleX(1.200);transform-origin:0 0;-webkit-text-stroke:0.25px currentColor;">11.2%</div>
<div class="t" style="left:29.8px;top:638.1px;font-size:11px;font-weight:bold;color:#101010;letter-spacing:0.23px;transform:scaleX(1.200);transform-origin:0 0;-webkit-text-stroke:0.25px currentColor;">4th Place:</div>
<div class="t" style="left:155.1px;top:638.1px;font-size:11px;font-weight:bold;color:#161678;letter-spacing:0.95px;transform:scaleX(1.200);transform-origin:0 0;-webkit-text-stroke:0.25px currentColor;">12.3%</div>
</body></html>
